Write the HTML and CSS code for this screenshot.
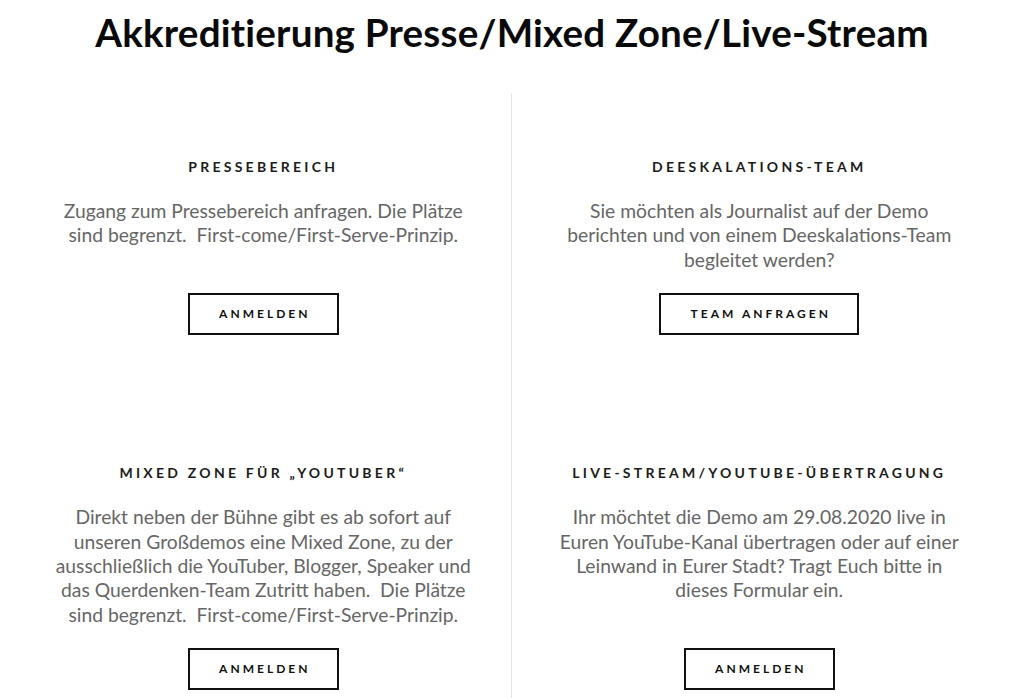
FILE: index.html
```html
<!DOCTYPE html>
<html lang="de">
<head>
<meta charset="utf-8">
<title>Akkreditierung</title>
<link rel="stylesheet" href="styles.css">
</head>
<body>
<h1 class="title">Akkreditierung Presse/Mixed Zone/Live-Stream</h1>
<div class="grid">
  <section class="card card-left">
    <h2 class="card-heading">Pressebereich</h2>
    <p class="card-text">Zugang zum Pressebereich anfragen. Die Plätze sind begrenzt.&nbsp; First-come/First-Serve-Prinzip.</p>
    <a class="btn" href="#">Anmelden</a>
  </section>
  <section class="card card-right">
    <h2 class="card-heading">Deeskalations-Team</h2>
    <p class="card-text">Sie möchten als Journalist auf der Demo berichten und von einem Deeskalations-Team begleitet werden?</p>
    <a class="btn btn-wide" href="#">Team anfragen</a>
  </section>
  <section class="card card-left card-bottom">
    <h2 class="card-heading">Mixed Zone für „YouTuber“</h2>
    <p class="card-text">Direkt neben der Bühne gibt es ab sofort auf unseren Großdemos eine Mixed Zone, zu der ausschließlich die YouTuber, Blogger, Speaker und das Querdenken-Team Zutritt haben.&nbsp; Die Plätze sind begrenzt.&nbsp; First-come/First-Serve-Prinzip.</p>
    <a class="btn" href="#">Anmelden</a>
  </section>
  <section class="card card-right card-bottom">
    <h2 class="card-heading">Live-Stream/YouTube-Übertragung</h2>
    <p class="card-text">Ihr möchtet die Demo am 29.08.2020 live in Euren YouTube-Kanal übertragen oder auf einer Leinwand in Eurer Stadt? Tragt Euch bitte in dieses Formular ein.</p>
    <a class="btn" href="#">Anmelden</a>
  </section>
</div>
</body>
</html>
```

FILE: styles.css
```css
* { box-sizing: border-box; }
html, body { margin: 0; padding: 0; background: #fff; }
body {
  font-family: Lato, "Liberation Sans", sans-serif;
  color: #666;
  overflow: hidden;
}
.title {
  margin: 0;
  padding-top: 8px;
  text-align: center;
  font-family: Lato, "Noto Sans", sans-serif;
  font-weight: 700;
  font-size: 38.6px;
  line-height: 48px;
  color: #0a0a0a;
  letter-spacing: 0.2px;
}
.grid {
  display: grid;
  grid-template-columns: 1fr 1fr;
  margin: 38px 17px 0 16px;
}
.card {
  display: flex;
  flex-direction: column;
  align-items: center;
  text-align: center;
  padding: 63px 30px 65px;
}
.card-bottom { padding-bottom: 8px; }
.card-left { border-right: 1px solid #e3e3e3; }
.card-heading {
  margin: 0 0 22px;
  font-size: 14px;
  line-height: 20px;
  font-weight: 700;
  letter-spacing: 3.25px;
  text-transform: uppercase;
  color: #1c1c1c;
}
.card-text {
  margin: 0 0 21px;
  max-width: 432px;
  font-size: 19.3px;
  line-height: 24.4px;
  color: #666;
}
.card-right .card-text { max-width: 416px; }
.btn {
  margin-top: auto;
  display: inline-block;
  width: 151px;
  height: 42px;
  line-height: 38px;
  border: 2px solid #111;
  color: #111;
  text-decoration: none;
  text-transform: uppercase;
  font-size: 12px;
  font-weight: 700;
  letter-spacing: 3px;
  padding-left: 3px;
}
.btn-wide { width: 200px; }
```
